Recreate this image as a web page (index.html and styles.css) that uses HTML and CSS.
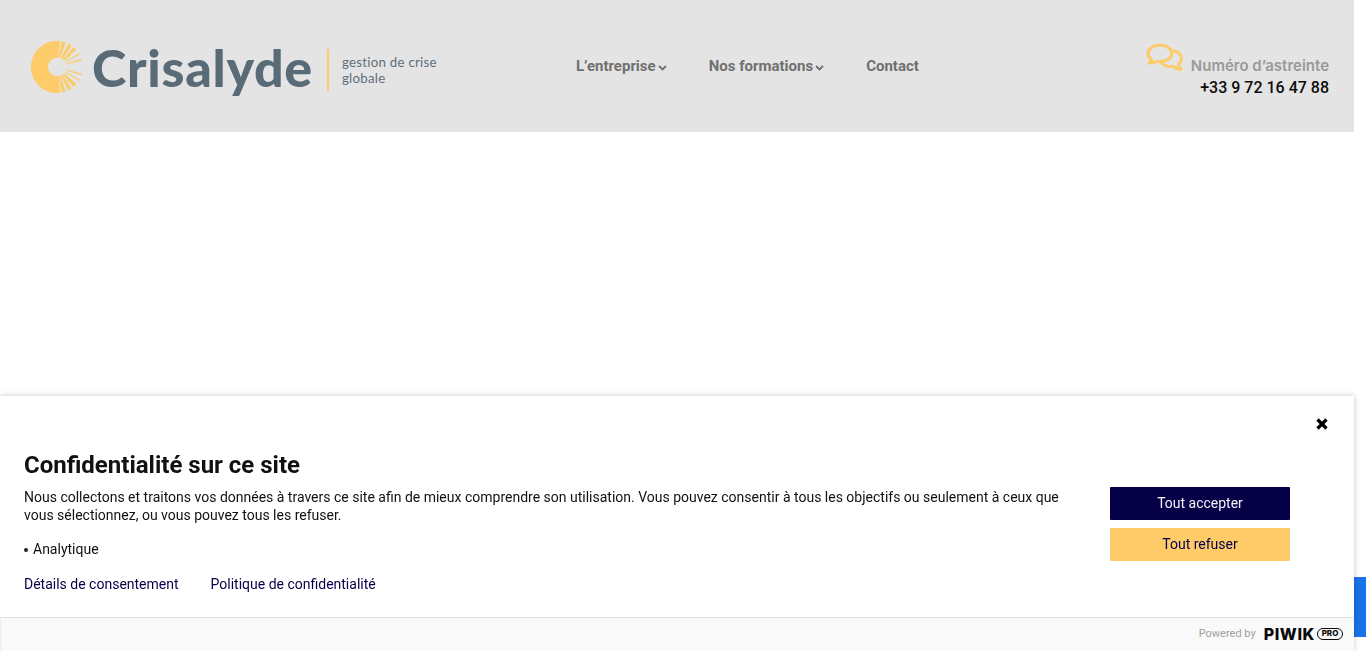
FILE: index.html
```html
<!DOCTYPE html>
<html lang="fr">
<head>
<meta charset="utf-8">
<title>Crisalyde</title>
<link rel="stylesheet" href="styles.css">
</head>
<body>
<div class="page">
  <header class="site-header">
    <a class="logo" href="#">
      <svg class="sun" width="54" height="54" viewBox="-27 -27 54 54" aria-hidden="true">
        <defs><polygon id="ray" points="9,-1.300 26,-3.200 26,3.200 9,1.300"/><polygon id="thin" points="10,-.5 26,-.8 26,.8 10,.5"/><polygon id="mid" points="9.5,-.9 26,-2 26,2 9.5,.9"/></defs>
        <g fill="#fdcb68">
          <use href="#thin" transform="rotate(-17)"/><use href="#thin" transform="rotate(17)"/>
          <use href="#thin" transform="rotate(-31)"/><use href="#thin" transform="rotate(31)"/>
          <use href="#mid" transform="rotate(-46)"/><use href="#mid" transform="rotate(46)"/>
          <use href="#mid" transform="rotate(-60)"/><use href="#mid" transform="rotate(60)"/>
          <use href="#mid" transform="rotate(-75)"/><use href="#mid" transform="rotate(75)"/>
          <use href="#ray" transform="rotate(-90)"/><use href="#ray" transform="rotate(90)"/>
          <use href="#ray" transform="rotate(-104)"/><use href="#ray" transform="rotate(104)"/>
          <use href="#ray" transform="rotate(-118)"/><use href="#ray" transform="rotate(118)"/>
          <use href="#ray" transform="rotate(-132)"/><use href="#ray" transform="rotate(132)"/>
          <use href="#ray" transform="rotate(-146)"/><use href="#ray" transform="rotate(146)"/>
          <use href="#ray" transform="rotate(-158)"/><use href="#ray" transform="rotate(158)"/>
          <use href="#ray" transform="rotate(-169)"/><use href="#ray" transform="rotate(169)"/>
          <use href="#ray" transform="rotate(180)"/>
        </g>
      </svg>
      <span class="brand">Crisalyde</span>
      <span class="tagline">gestion de crise<br>globale</span>
    </a>
    <nav class="main-nav">
      <a href="#">L’entreprise<svg class="chev" width="9" height="6" viewBox="0 0 9 6"><path d="M1 1l3.500 3.500L8 1" fill="none" stroke="#707070" stroke-width="1.800"/></svg></a>
      <a href="#">Nos formations<svg class="chev" width="9" height="6" viewBox="0 0 9 6"><path d="M1 1l3.500 3.500L8 1" fill="none" stroke="#707070" stroke-width="1.800"/></svg></a>
      <a href="#">Contact</a>
    </nav>
    <div class="hotline">
      <svg class="chat" width="38" height="30" viewBox="0 0 38 30" aria-hidden="true">
        <g fill="none" stroke="#fdcb68" stroke-width="3" stroke-linejoin="round">
          <path d="M14 2C7.500 2 2 5.800 2 10.500c0 2.600 1.500 4.800 3.800 6.400L3 20c3 .2 5.800-.4 8-1.600 1 .2 2 .3 3 .3 6.500 0 11.800-3.600 11.800-8.200S20.500 2 14 2z"/>
          <path d="M27 7.500c5 1 8.500 4.200 8.500 8 0 2.400-1.300 4.400-3.300 5.900l2.800 5.100c-3-.2-6-1.300-8-3-5.500.6-10.500-1.500-12.500-5"/>
        </g>
      </svg>
      <div class="hotline-text">
        <div class="hotline-label">Numéro d’astreinte</div>
        <div class="hotline-phone">+33 9 72 16 47 88</div>
      </div>
    </div>
  </header>
</div>

<div class="recaptcha"></div>

<section class="consent">
  <div class="consent-main">
    <button class="close" aria-label="Fermer">
      <svg width="12" height="12" viewBox="0 0 12 12"><path d="M1.500 1.500l9 9M10.500 1.500l-9 9" stroke="#000" stroke-width="3.200"/></svg>
    </button>
    <div class="consent-body">
      <div class="consent-text">
        <h2>Confidentialité sur ce site</h2>
        <p>Nous collectons et traitons vos données à travers ce site afin de mieux comprendre son utilisation. Vous pouvez consentir à tous les objectifs ou seulement à ceux que vous sélectionnez, ou vous pouvez tous les refuser.</p>
        <ul><li>Analytique</li></ul>
        <div class="links"><a href="#">Détails de consentement</a><a href="#">Politique de confidentialité</a></div>
      </div>
      <div class="actions">
        <button class="btn accept">Tout accepter</button>
        <button class="btn refuse">Tout refuser</button>
      </div>
    </div>
  </div>
  <footer class="consent-foot">
    <span class="powered">Powered by</span>
    <span class="piwik">PIWIK</span>
    <span class="pro">PRO</span>
  </footer>
</section>
</body>
</html>
```
FILE: styles.css
```css
* { box-sizing: border-box; }
html, body { margin: 0; height: 651px; overflow: hidden; background: #fff; }
body { font-family: Roboto, sans-serif; color: #111; }
a { text-decoration: none; color: inherit; }

.page { width: 1354px; }
.site-header {
  height: 132px;
  background: #e4e4e4;
  display: flex;
  align-items: center;
  padding: 0 25px 0 30px;
}
.logo { display: flex; align-items: center; width: 546px; height: 100%; }
.sun { flex: none; margin-right: 8px; margin-top: 2px; }
.brand {
  font: 900 52px/1 Lato, sans-serif;
  color: #5a6b78;
  margin-top: 2px;
  letter-spacing: .7px;
}
.tagline {
  font: 400 13.300px/16px Lato, sans-serif;
  letter-spacing: .25px;
  color: #5f6f7b;
  border-left: 2px solid #fdcb68;
  margin-left: 14px;
  margin-top: 8px;
  padding: 5px 0 5px 13px;
}
.main-nav { display: flex; gap: 42px; font: 700 15px/1 Roboto, sans-serif; color: #707070; margin-top: 0; }
.main-nav a { display: flex; align-items: center; }
.chev { margin-left: 2px; margin-top: 4px; }
.hotline { margin-left: auto; display: flex; align-items: flex-start; position: relative; margin-top: 22px; }
.chat { flex: none; margin: -12px 7px 0 0; }
.hotline-text { text-align: right; padding-top: 0; }
.hotline-label { font: 600 15px/22px Inter, sans-serif; color: #999; letter-spacing: 0; margin-top: 0; }
.hotline-phone { font: 500 16px/22px Roboto, sans-serif; color: #0c0c0c; }

.recaptcha {
  position: fixed;
  left: 1354px; top: 577px;
  width: 12px; height: 60px;
  background: #1a73e8;
}

.consent {
  position: fixed;
  left: 0; top: 396px;
  width: 1354px; height: 255px;
  background: #fff;
  box-shadow: 0 0 6px rgba(0,0,0,.22);
  display: flex;
  flex-direction: column;
}
.consent-main { flex: 1; position: relative; padding: 55px 64px 0 24px; }
.close {
  position: absolute; right: 25px; top: 21px;
  width: 14px; height: 14px;
  padding: 0; border: 0; background: none;
  display: flex; align-items: center; justify-content: center;
}
.consent-body { display: flex; justify-content: space-between; }
.consent-text { width: 1040px; }
h2 { margin: 0 0 9px; font: 700 24px/28px Roboto, sans-serif; color: #111; }
p { margin: 0; font: 400 14px/18px Roboto, sans-serif; color: #111; }
ul { margin: 16px 0 0; padding: 0 0 0 9px; font: 400 14px/18px Roboto, sans-serif; }
li { list-style: none; position: relative; }
li::before {
  content: ""; position: absolute; left: -9px; top: 8px;
  width: 4px; height: 4px; border-radius: 50%; background: #222;
}
.links { display: flex; gap: 32px; margin-top: 17px; font: 400 14px/18px Roboto, sans-serif; color: #060047; }
.actions { width: 180px; flex: none; display: flex; flex-direction: column; gap: 8px; margin-top: 36px; }
.btn {
  height: 33px; border: 0; border-radius: 1px;
  font: 400 14px/1 Roboto, sans-serif;
  padding: 0 0 2px;
}
.accept { background: #060047; color: #f2f2f8; }
.refuse { background: #fdcb68; color: #060047; }

.consent-foot {
  height: 34px;
  flex: none;
  background: #f9f9f9;
  border-top: 1px solid #e2e2e2;
  border-left: 1px solid #eee;
  display: flex;
  align-items: center;
  justify-content: flex-end;
  padding: 0 11px 2px 0;
}
.powered { font: 400 11px/1 Roboto, sans-serif; color: #a0a0a0; margin-right: 8px; }
.piwik { font: 800 16px/1 Inter, sans-serif; color: #0a0a0a; letter-spacing: .6px; margin-right: 2px; }
.pro {
  font: 800 8px/9px Inter, sans-serif;
  color: #0a0a0a;
  border: 1.500px solid #0a0a0a;
  border-radius: 6px;
  padding: 0 3px;
  width: 26px;
  height: 12px;
  text-align: center;
}
```
